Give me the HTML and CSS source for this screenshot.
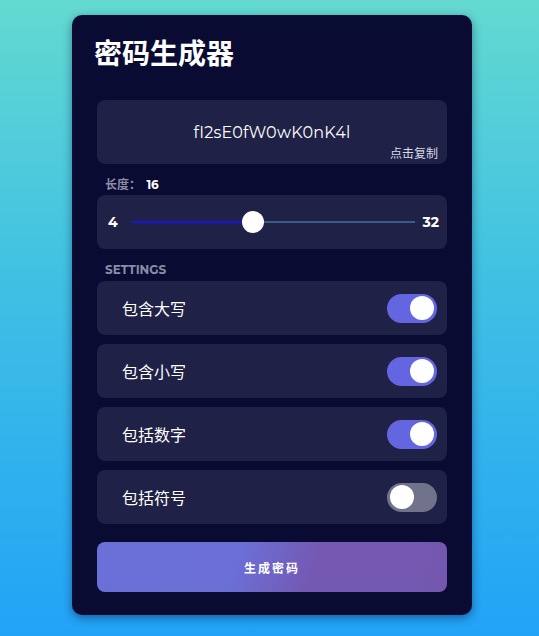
FILE: index.html
```html
<!DOCTYPE html>
<html lang="zh">
<head>
<meta charset="utf-8">
<title>密码生成器</title>
<link rel="stylesheet" href="styles.css">
</head>
<body>
<div class="card">
  <h1 class="title">密码生成器</h1>
  <div class="result">
    <span class="pwd">fI2sE0fW0wK0nK4l</span>
    <span class="copy">点击复制</span>
  </div>
  <div class="label">长度： <span class="len">16</span></div>
  <div class="panel slider">
    <span class="num">4</span>
    <div class="track">
      <div class="fill" style="width:42.86%"></div>
      <div class="thumb"></div>
    </div>
    <span class="num">32</span>
  </div>
  <div class="label settings">SETTINGS</div>
  <div class="options">
    <div class="panel row"><span>包含大写</span><span class="toggle on"></span></div>
    <div class="panel row"><span>包含小写</span><span class="toggle on"></span></div>
    <div class="panel row"><span>包括数字</span><span class="toggle on"></span></div>
    <div class="panel row"><span>包括符号</span><span class="toggle"></span></div>
  </div>
  <button class="gen">生成密码</button>
</div>
</body>
</html>
```
FILE: styles.css
```css
* { box-sizing: border-box; }
html, body { margin: 0; height: 636px; }
body {
  background: linear-gradient(to bottom, #63d9d1 0%, #3fc0e3 45%, #22a3f7 100%);
  font-family: "Montserrat", "Inter", "Noto Sans CJK SC", sans-serif;
  color: #fff;
  padding-top: 15px;
}
.card {
  margin-left: 72px;
  width: 400px;
  height: 600px;
  background: #0a0b33;
  border-radius: 10px;
  box-shadow: 0 3px 10px rgba(5, 10, 60, 0.45);
  padding: 18px 25px 0 25px;
  display: flex;
  flex-direction: column;
}
.title {
  margin: 0 0 29px -3px;
  font-family: "Noto Sans CJK SC", sans-serif;
  font-size: 28px;
  line-height: 38px;
  font-weight: 700;
}
.result {
  position: relative;
  height: 64px;
  background: #1f2146;
  border-radius: 8px;
  display: flex;
  align-items: center;
  justify-content: center;
}
.pwd {
  font-size: 16px;
  letter-spacing: 0.2px;
}
.copy {
  position: absolute;
  right: 9px;
  bottom: 3px;
  font-size: 12px;
  line-height: 16px;
  color: #d8dae6;
  font-family: "Noto Sans CJK SC", sans-serif;
}
.label {
  margin: 13px 0 3px 8px;
  font-size: 12px;
  line-height: 15px;
  font-weight: 700;
  color: #8c8ea6;
  font-family: "Montserrat", "Inter", "Noto Sans CJK SC", sans-serif;
}
.len { color: #fff; margin-left: 2px; }
.settings { margin-top: 13px; margin-bottom: 4px; }
.panel {
  background: #1f2146;
  border-radius: 8px;
}
.slider {
  height: 54px;
  display: flex;
  align-items: center;
  padding: 0 8px 0 11px;
}
.num {
  font-size: 14px;
  font-weight: 700;
}
.track {
  position: relative;
  flex: 1;
  height: 2px;
  margin: 0 8px 0 14px;
  background: #3a5a8c;
}
.fill {
  height: 2px;
  background: #1515d8;
}
.thumb {
  position: absolute;
  left: calc(42.86% - 11px);
  top: -10px;
  width: 22px;
  height: 22px;
  border-radius: 50%;
  background: #fff;
}
.options {
  display: flex;
  flex-direction: column;
  gap: 9px;
}
.row {
  height: 54px;
  display: flex;
  align-items: center;
  justify-content: space-between;
  padding: 0 10px 0 25px;
  font-family: "Noto Sans CJK SC", sans-serif;
  font-size: 16px;
  font-weight: 400;
  color: #fff;
}
.toggle {
  width: 50px;
  height: 29px;
  border-radius: 15px;
  background: #70738a;
  display: flex;
  align-items: center;
  padding: 0 3px;
}
.toggle::after {
  content: "";
  width: 24px;
  height: 24px;
  border-radius: 50%;
  background: #fff;
}
.toggle.on {
  background: #6366e0;
  justify-content: flex-end;
}
.gen {
  margin-top: 18px;
  height: 50px;
  border: 0;
  border-radius: 8px;
  background: linear-gradient(110deg, #6a70d8 0%, #6b6fd6 40%, #7458b2 62%, #7458b0 100%);
  color: #fff;
  font-family: "Noto Sans CJK SC", sans-serif;
  font-size: 12px;
  font-weight: 700;
  letter-spacing: 2px;
}
```
